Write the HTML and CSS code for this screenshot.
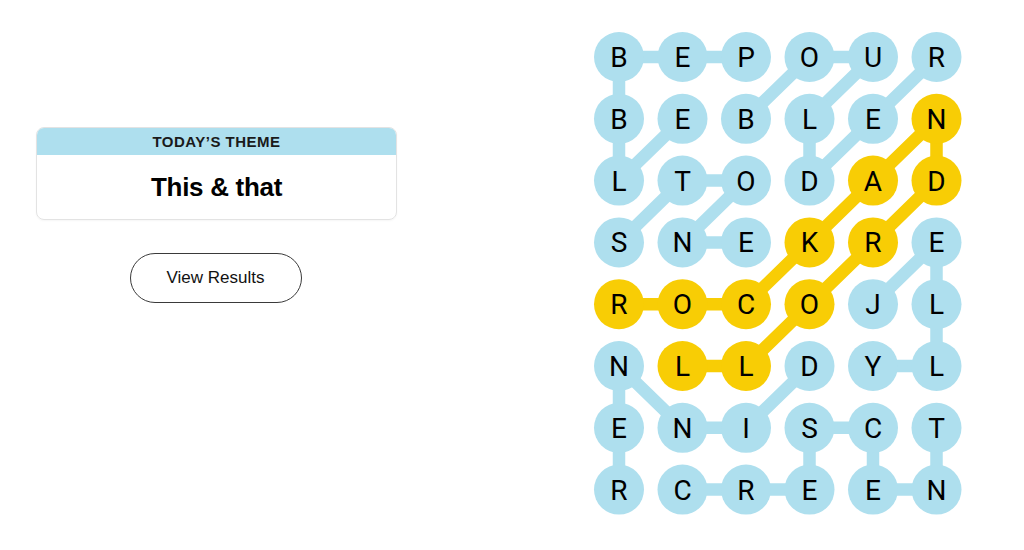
FILE: index.html
```html
<!DOCTYPE html>
<html lang="en">
<head>
<meta charset="utf-8">
<title>Strands</title>
<link rel="stylesheet" href="styles.css">
</head>
<body>
<main class="page">
  <section class="side">
    <div class="theme-card">
      <div class="theme-head">TODAY’S THEME</div>
      <div class="theme-body">This &amp; that</div>
    </div>
    <button class="results-btn" type="button">View Results</button>
  </section>
  <section class="board">
    <svg class="grid" width="400" height="500" viewBox="0 0 400 500" xmlns="http://www.w3.org/2000/svg">
      <g class="links">
        <polyline points="166,32 102.5,32 39,32 39,93.8 39,155.6 102.5,93.8"/>
        <polyline points="166,93.8 229.5,32 293,32 229.5,93.8 229.5,155.6 293,93.8 356.5,32"/>
        <polyline points="39,217.4 102.5,155.6 166,155.6 102.5,217.4 166,217.4"/>
        <polyline points="293,279.2 356.5,217.4 356.5,279.2 356.5,341 293,341"/>
        <polyline points="229.5,341 166,402.8 102.5,402.8 39,341 39,402.8 39,464.6"/>
        <polyline points="102.5,464.6 166,464.6 229.5,464.6 229.5,402.8 293,402.8 293,464.6 356.5,464.6 356.5,402.8"/>
      </g>
      <g class="links gold">
        <polyline points="39,279.2 102.5,279.2 166,279.2 229.5,217.4 293,155.6 356.5,93.8 356.5,155.6 293,217.4 229.5,279.2 166,341 102.5,341"/>
      </g>
      <g class="nodes">
        <circle cx="39" cy="32" r="25"/><circle cx="102.5" cy="32" r="25"/><circle cx="166" cy="32" r="25"/><circle cx="229.5" cy="32" r="25"/><circle cx="293" cy="32" r="25"/><circle cx="356.5" cy="32" r="25"/>
        <circle cx="39" cy="93.8" r="25"/><circle cx="102.5" cy="93.8" r="25"/><circle cx="166" cy="93.8" r="25"/><circle cx="229.5" cy="93.8" r="25"/><circle cx="293" cy="93.8" r="25"/><circle class="gold" cx="356.5" cy="93.8" r="25"/>
        <circle cx="39" cy="155.6" r="25"/><circle cx="102.5" cy="155.6" r="25"/><circle cx="166" cy="155.6" r="25"/><circle cx="229.5" cy="155.6" r="25"/><circle class="gold" cx="293" cy="155.6" r="25"/><circle class="gold" cx="356.5" cy="155.6" r="25"/>
        <circle cx="39" cy="217.4" r="25"/><circle cx="102.5" cy="217.4" r="25"/><circle cx="166" cy="217.4" r="25"/><circle class="gold" cx="229.5" cy="217.4" r="25"/><circle class="gold" cx="293" cy="217.4" r="25"/><circle cx="356.5" cy="217.4" r="25"/>
        <circle class="gold" cx="39" cy="279.2" r="25"/><circle class="gold" cx="102.5" cy="279.2" r="25"/><circle class="gold" cx="166" cy="279.2" r="25"/><circle class="gold" cx="229.5" cy="279.2" r="25"/><circle cx="293" cy="279.2" r="25"/><circle cx="356.5" cy="279.2" r="25"/>
        <circle cx="39" cy="341" r="25"/><circle class="gold" cx="102.5" cy="341" r="25"/><circle class="gold" cx="166" cy="341" r="25"/><circle cx="229.5" cy="341" r="25"/><circle cx="293" cy="341" r="25"/><circle cx="356.5" cy="341" r="25"/>
        <circle cx="39" cy="402.8" r="25"/><circle cx="102.5" cy="402.8" r="25"/><circle cx="166" cy="402.8" r="25"/><circle cx="229.5" cy="402.8" r="25"/><circle cx="293" cy="402.8" r="25"/><circle cx="356.5" cy="402.8" r="25"/>
        <circle cx="39" cy="464.6" r="25"/><circle cx="102.5" cy="464.6" r="25"/><circle cx="166" cy="464.6" r="25"/><circle cx="229.5" cy="464.6" r="25"/><circle cx="293" cy="464.6" r="25"/><circle cx="356.5" cy="464.6" r="25"/>
      </g>
      <g class="letters">
        <text x="39" y="42">B</text><text x="102.5" y="42">E</text><text x="166" y="42">P</text><text x="229.5" y="42">O</text><text x="293" y="42">U</text><text x="356.5" y="42">R</text>
        <text x="39" y="103.8">B</text><text x="102.5" y="103.8">E</text><text x="166" y="103.8">B</text><text x="229.5" y="103.8">L</text><text x="293" y="103.8">E</text><text x="356.5" y="103.8">N</text>
        <text x="39" y="165.6">L</text><text x="102.5" y="165.6">T</text><text x="166" y="165.6">O</text><text x="229.5" y="165.6">D</text><text x="293" y="165.6">A</text><text x="356.5" y="165.6">D</text>
        <text x="39" y="227.4">S</text><text x="102.5" y="227.4">N</text><text x="166" y="227.4">E</text><text x="229.5" y="227.4">K</text><text x="293" y="227.4">R</text><text x="356.5" y="227.4">E</text>
        <text x="39" y="289.2">R</text><text x="102.5" y="289.2">O</text><text x="166" y="289.2">C</text><text x="229.5" y="289.2">O</text><text x="293" y="289.2">J</text><text x="356.5" y="289.2">L</text>
        <text x="39" y="351">N</text><text x="102.5" y="351">L</text><text x="166" y="351">L</text><text x="229.5" y="351">D</text><text x="293" y="351">Y</text><text x="356.5" y="351">L</text>
        <text x="39" y="412.8">E</text><text x="102.5" y="412.8">N</text><text x="166" y="412.8">I</text><text x="229.5" y="412.8">S</text><text x="293" y="412.8">C</text><text x="356.5" y="412.8">T</text>
        <text x="39" y="474.6">R</text><text x="102.5" y="474.6">C</text><text x="166" y="474.6">R</text><text x="229.5" y="474.6">E</text><text x="293" y="474.6">E</text><text x="356.5" y="474.6">N</text>
      </g>
    </svg>
  </section>
</main>
</body>
</html>
```

FILE: styles.css
```css
html, body {
  margin: 0;
  padding: 0;
  background: #ffffff;
}

body {
  width: 1024px;
  height: 550px;
  overflow: hidden;
  font-family: "Liberation Sans", Arial, sans-serif;
  color: #121212;
}

.page {
  display: flex;
  align-items: flex-start;
}

.side {
  width: 361px;
  margin-left: 36px;
  padding-top: 127px;
  display: flex;
  flex-direction: column;
  align-items: center;
}

.theme-card {
  width: 100%;
  box-sizing: border-box;
  border: 1px solid #e3e3e3;
  border-radius: 8px;
  overflow: hidden;
  box-shadow: 0 1px 2px rgba(0, 0, 0, 0.04);
}

.theme-head {
  height: 27px;
  background: #aedfee;
  display: flex;
  align-items: center;
  justify-content: center;
  font-size: 15px;
  font-weight: 700;
  letter-spacing: 0.5px;
  color: #1a1a1a;
}

.theme-body {
  height: 64px;
  display: flex;
  align-items: center;
  justify-content: center;
  font-size: 26px;
  font-weight: 700;
  letter-spacing: -0.3px;
  color: #000;
}

.results-btn {
  margin-top: 33px;
  width: 172px;
  height: 50px;
  border: 1px solid #3a3a3a;
  border-radius: 25px;
  background: #ffffff;
  font-family: "Liberation Sans", Arial, sans-serif;
  font-size: 17px;
  color: #121212;
  padding: 0;
  margin-right: 2px;
}

.board {
  margin-left: 183px;
  margin-top: 25px;
}

.grid {
  display: block;
}

.links polyline {
  fill: none;
  stroke: #aedfee;
  stroke-width: 12.5;
  stroke-linejoin: round;
}

.links.gold polyline {
  stroke: #f8cd05;
}

.nodes circle {
  fill: #aedfee;
}

.nodes circle.gold {
  fill: #f8cd05;
}

.letters text {
  font-family: Roboto, "Liberation Sans", sans-serif;
  font-size: 28px;
  font-weight: 400;
  fill: #000;
  text-anchor: middle;
}
```
